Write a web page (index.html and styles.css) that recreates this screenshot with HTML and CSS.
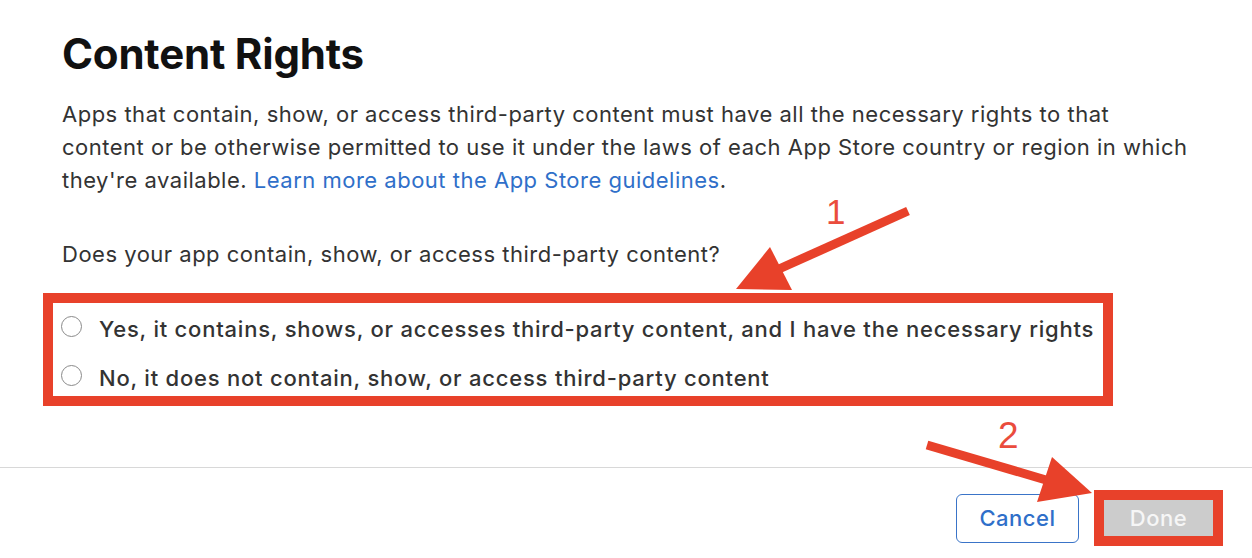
FILE: index.html
```html
<!DOCTYPE html>
<html lang="en">
<head>
<meta charset="utf-8">
<title>Content Rights</title>
<link rel="stylesheet" href="styles.css">
</head>
<body>
<div class="page">
  <main class="content">
    <h1 class="title">Content Rights</h1>
    <p class="desc">Apps that contain, show, or access third-party content must have all the necessary rights to that<br>content or be otherwise permitted to use it under the laws of each App Store country or region in which<br>they're available. <a class="link" href="#">Learn more about the App Store guidelines</a>.</p>
    <p class="question">Does your app contain, show, or access third-party content?</p>
    <div class="choices">
      <label class="choice"><span class="radio"></span><span class="choice-text">Yes, it contains, shows, or accesses third-party content, and I have the necessary rights</span></label>
      <label class="choice"><span class="radio"></span><span class="choice-text">No, it does not contain, show, or access third-party content</span></label>
    </div>
  </main>
  <footer class="footer">
    <button class="btn btn-cancel">Cancel</button>
    <div class="done-mark"><button class="btn btn-done">Done</button></div>
  </footer>
  <svg class="annot" width="1252" height="558" viewBox="0 0 1252 558">
    <line x1="908" y1="211" x2="779" y2="269" stroke="#e8412a" stroke-width="9"/>
    <polygon points="736,289 770,247 792,290" fill="#e8412a"/>
    <line x1="927" y1="445" x2="1046" y2="480" stroke="#e8412a" stroke-width="9"/>
    <polygon points="1092,493 1052,457 1037,502" fill="#e8412a"/>
  </svg>
  <span class="num num1">1</span>
  <span class="num num2">2</span>
</div>
</body>
</html>
```
FILE: styles.css
```css
html, body {
  margin: 0;
  padding: 0;
  background: #ffffff;
}
body {
  font-family: Inter, "Liberation Sans", sans-serif;
  color: #333333;
}
.page {
  position: relative;
  width: 1252px;
  height: 558px;
  overflow: hidden;
}
.content {
  padding: 26px 0 0 62px;
}
.title {
  margin: 0;
  font-size: 42px;
  line-height: 56px;
  font-weight: 700;
  color: #111111;
  letter-spacing: -0.2px;
}
.desc {
  margin: 16px 0 0;
  font-size: 22px;
  line-height: 33px;
  font-weight: 400;
  color: #333333;
  letter-spacing: 0.5px;
}
.link {
  color: #2f6fc9;
  text-decoration: none;
}
.question {
  margin: 41px 0 0;
  font-size: 22px;
  line-height: 33px;
  color: #333333;
  letter-spacing: 0.5px;
}
.choices {
  box-sizing: border-box;
  margin: 22px 0 0 -19px;
  width: 1070px;
  border: 10px solid #e8412a;
  padding: 8px 0 0 8px;
  display: flex;
  flex-direction: column;
  gap: 13px;
}
.choice {
  display: flex;
  align-items: center;
  height: 36px;
  gap: 17px;
}
.radio {
  width: 19px;
  height: 19px;
  border: 1.5px solid #8a8a8a;
  border-radius: 50%;
  box-sizing: content-box;
  flex: none;
  margin-top: -5px;
}
.choice-text {
  font-size: 22px;
  font-weight: 500;
  color: #333333;
  letter-spacing: 0.78px;
}
.footer {
  position: absolute;
  left: 0;
  right: 0;
  top: 467px;
  border-top: 1px solid #d8d8d8;
  display: flex;
  justify-content: flex-end;
  align-items: center;
  gap: 15px;
  padding: 22px 29px 0 0;
}
.btn {
  font-family: Inter, "Liberation Sans", sans-serif;
  font-size: 22px;
  font-weight: 500;
  letter-spacing: 0.5px;
  margin: 0;
  cursor: pointer;
}
.btn-cancel {
  width: 123px;
  height: 49px;
  border: 1px solid #3a74c8;
  border-radius: 6px;
  background: #ffffff;
  color: #2f6fc9;
}
.done-mark {
  border: 10px solid #e8412a;
  display: flex;
}
.btn-done {
  width: 109px;
  height: 36px;
  border: none;
  border-radius: 0;
  background: #cccccc;
  color: #f6f6f6;
}
.annot {
  position: absolute;
  left: 0;
  top: 0;
  pointer-events: none;
}
.num {
  position: absolute;
  font-family: "Liberation Sans", sans-serif;
  color: #ea4c3d;
  font-weight: 400;
  line-height: 1;
}
.num1 {
  left: 826px;
  top: 194px;
  font-size: 35px;
}
.num2 {
  left: 998px;
  top: 417px;
  font-size: 37px;
}
```
